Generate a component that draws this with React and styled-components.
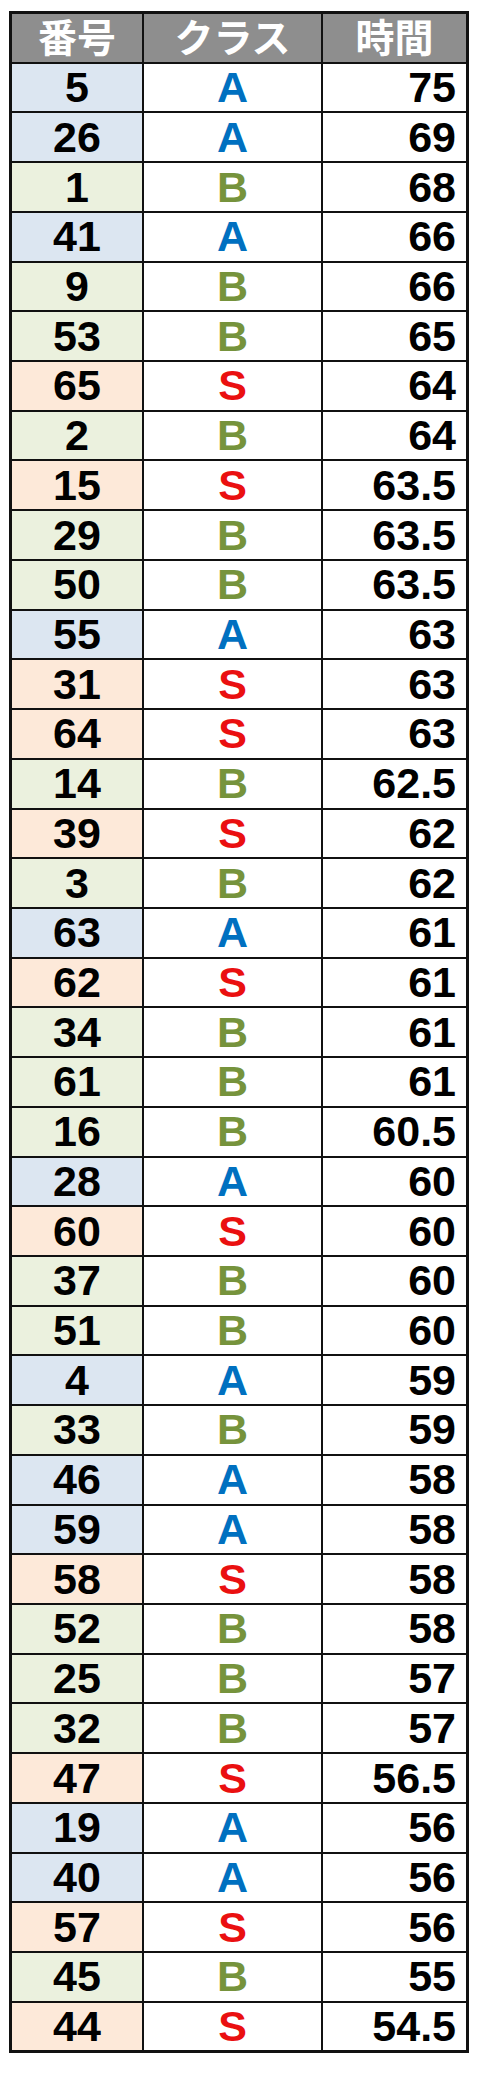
import React from 'react'
import styled, { createGlobalStyle } from 'styled-components'

const rows = [
  [5, 'A', '75'], [26, 'A', '69'], [1, 'B', '68'], [41, 'A', '66'],
  [9, 'B', '66'], [53, 'B', '65'], [65, 'S', '64'], [2, 'B', '64'],
  [15, 'S', '63.5'], [29, 'B', '63.5'], [50, 'B', '63.5'], [55, 'A', '63'],
  [31, 'S', '63'], [64, 'S', '63'], [14, 'B', '62.5'], [39, 'S', '62'],
  [3, 'B', '62'], [63, 'A', '61'], [62, 'S', '61'], [34, 'B', '61'],
  [61, 'B', '61'], [16, 'B', '60.5'], [28, 'A', '60'], [60, 'S', '60'],
  [37, 'B', '60'], [51, 'B', '60'], [4, 'A', '59'], [33, 'B', '59'],
  [46, 'A', '58'], [59, 'A', '58'], [58, 'S', '58'], [52, 'B', '58'],
  [25, 'B', '57'], [32, 'B', '57'], [47, 'S', '56.5'], [19, 'A', '56'],
  [40, 'A', '56'], [57, 'S', '56'], [45, 'B', '55'], [44, 'S', '54.5'],
]

const fills = { A: '#dce6f1', B: '#ebf1de', S: '#fde9d9' }
const inks = { A: '#0070c0', B: '#76933c', S: '#ea1010' }

const App = () => {
  return (
    <Page>
      <GlobalStyle />
      <Table>
        <Head>番号</Head>
        <Head>クラス</Head>
        <Head>時間</Head>
        {rows.map(([no, cls, time]) => (
          <React.Fragment key={no}>
            <NumberCell $cls={cls}>{no}</NumberCell>
            <ClassCell $cls={cls}>{cls}</ClassCell>
            <TimeCell>{time}</TimeCell>
          </React.Fragment>
        ))}
      </Table>
    </Page>
  )
}

export default App

const GlobalStyle = createGlobalStyle`
  body {
    margin: 0;
    background: #fff;
    font-family: "Liberation Sans", Arial, sans-serif;
  }
`

const Page = styled.div`
  padding: 11px 0 23px 9px;
`

const Table = styled.div`
  display: grid;
  grid-template-columns: 130px 177px 143px;
  grid-auto-rows: 47.73px;
  gap: 2px;
  width: 454px;
  background: #111;
  border: 3px solid #111;
`

const Cell = styled.div`
  display: flex;
  align-items: center;
  justify-content: center;
  background: #fff;
  font-size: 43px;
  font-weight: 700;
  color: #000;
  line-height: 1;
`

const Head = styled(Cell)`
  background: #8e8e8e;
  color: #fff;
  font-family: "Liberation Sans", "Noto Sans CJK JP", sans-serif;
  font-size: 39px;
  padding-top: 2px;
`

const NumberCell = styled(Cell)`
  background: ${(p) => fills[p.$cls]};
`

const ClassCell = styled(Cell)`
  color: ${(p) => inks[p.$cls]};
`

const TimeCell = styled(Cell)`
  justify-content: flex-end;
  padding-right: 10px;
`
